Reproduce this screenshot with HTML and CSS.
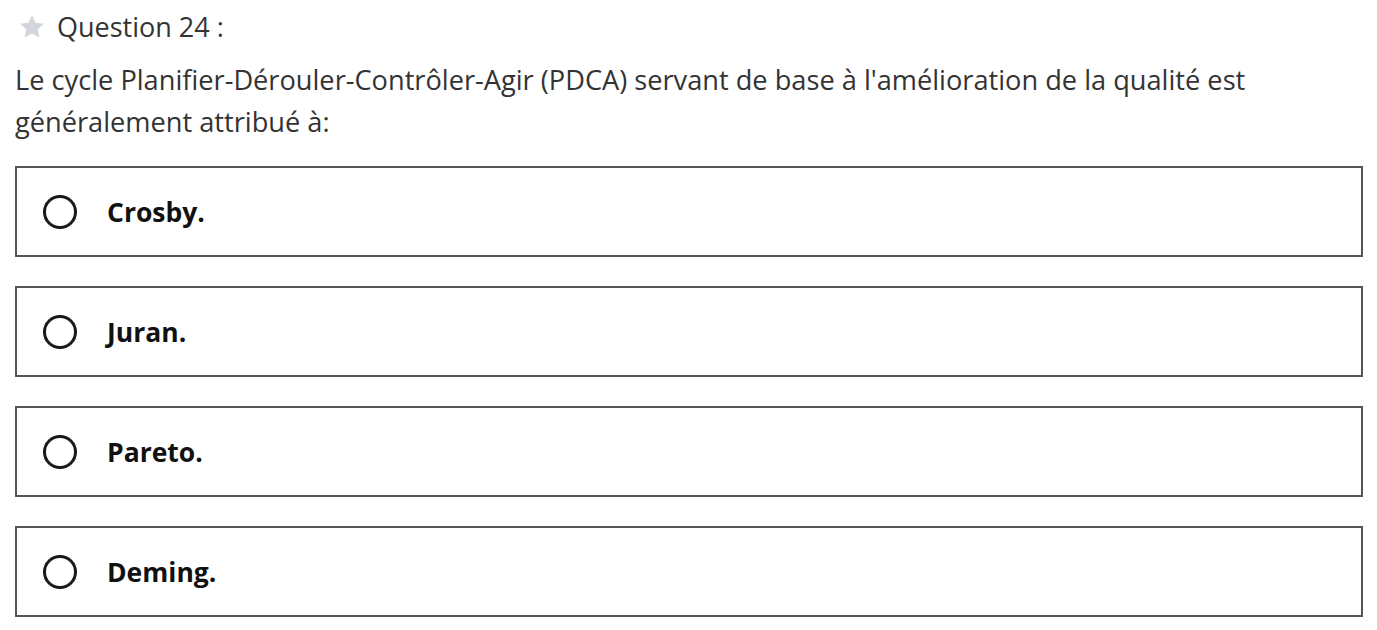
FILE: index.html
```html
<!DOCTYPE html>
<html lang="fr">
<head>
<meta charset="utf-8">
<link rel="stylesheet" href="styles.css">
</head>
<body>
<div class="page">
  <div class="qhead">
    <svg class="star" width="28" height="28" viewBox="0 0 24 24"><path d="M12 1.8l3.1 6.6 7.2.8-5.4 4.9 1.5 7.1L12 17.6l-6.4 3.6 1.5-7.1L1.7 9.2l7.2-.8z" fill="#d3d6db"/></svg>
    <span class="qlabel">Question 24 :</span>
  </div>
  <p class="qtext">Le cycle Planifier-Dérouler-Contrôler-Agir (PDCA) servant de base à l'amélioration de la qualité est généralement attribué à:</p>
  <div class="options">
    <div class="option"><span class="radio"></span><span class="otext">Crosby.</span></div>
    <div class="option"><span class="radio"></span><span class="otext">Juran.</span></div>
    <div class="option"><span class="radio"></span><span class="otext">Pareto.</span></div>
    <div class="option"><span class="radio"></span><span class="otext">Deming.</span></div>
  </div>
</div>
</body>
</html>
```

FILE: styles.css
```css
html, body {
  margin: 0;
  padding: 0;
  background: #ffffff;
}
.page {
  padding: 10px 14px 0 15px;
  font-family: "Open Sans", "Noto Sans", sans-serif;
  color: #333;
}
.qhead {
  display: flex;
  align-items: center;
  gap: 11px;
  height: 34px;
  padding-left: 3px;
}
.star {
  display: block;
}
.qlabel {
  font-size: 27px;
  line-height: 34px;
  color: #333;
}
.qtext {
  margin: 15px 0 0 0;
  font-size: 27.2px;
  line-height: 42px;
  color: #333;
  max-width: 1300px;
}
.options {
  margin-top: 23px;
  display: flex;
  flex-direction: column;
  gap: 29px;
}
.option {
  box-sizing: border-box;
  height: 91px;
  border: 2px solid #555;
  display: flex;
  align-items: center;
  padding-left: 26px;
  gap: 30px;
}
.radio {
  box-sizing: border-box;
  width: 34px;
  height: 34px;
  border: 3px solid #1a1a1a;
  border-radius: 50%;
  flex: none;
}
.otext {
  font-weight: 700;
  font-size: 26.5px;
  line-height: 34px;
  color: #111;
}
```
